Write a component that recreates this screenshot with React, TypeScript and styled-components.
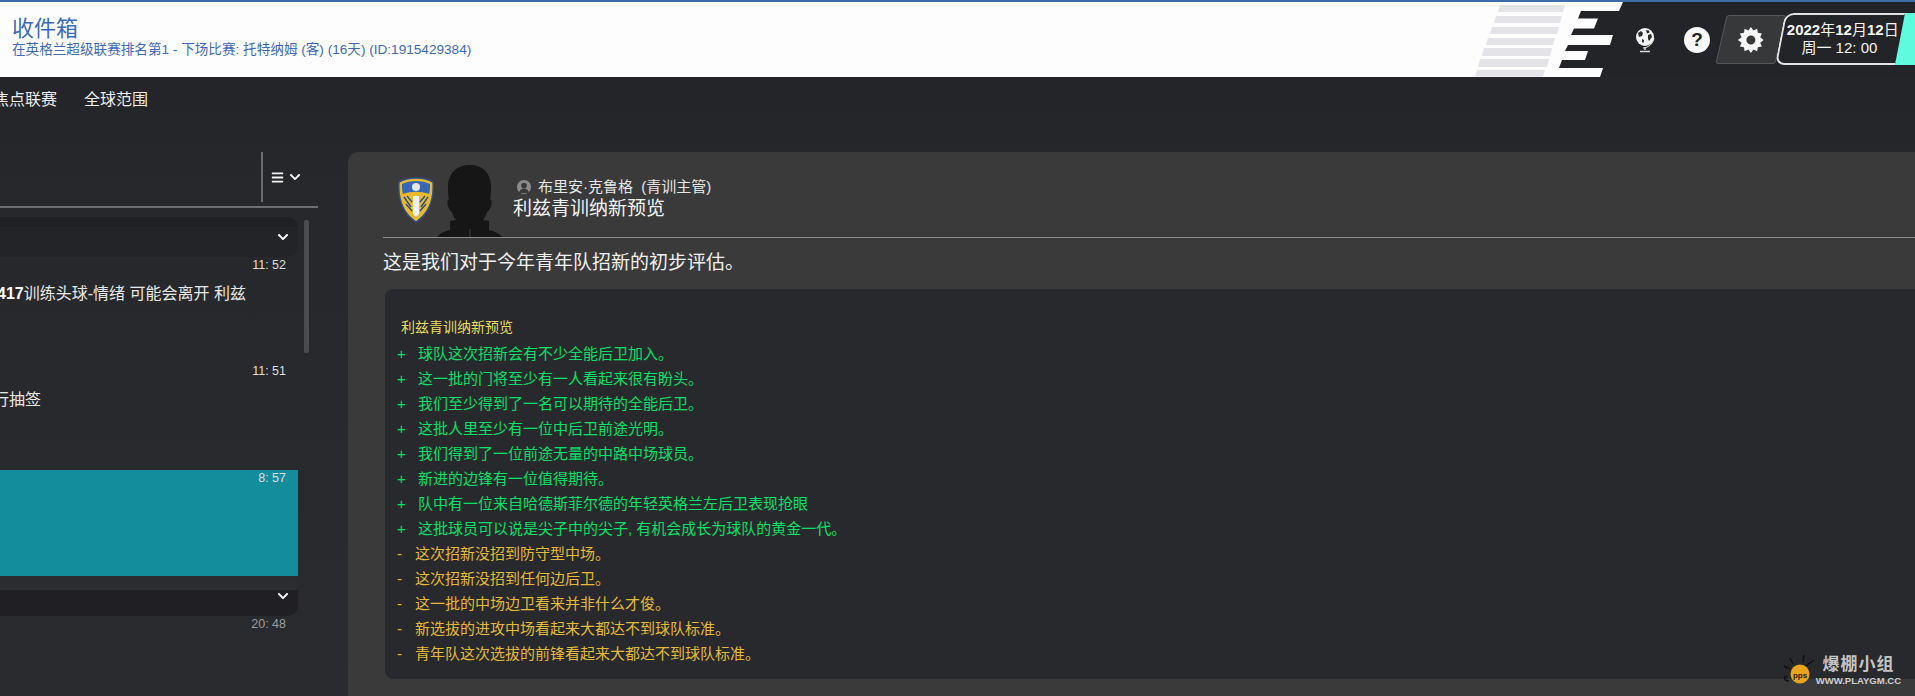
import React from 'react';
import styled, { createGlobalStyle } from 'styled-components';
import { FaBars, FaChevronDown } from 'react-icons/fa';

const GlobalStyle = createGlobalStyle`
  html, body {
    margin: 0;
    padding: 0;
    height: 100%;
    background: #26272b;
  }

  #root {
    height: 100%;
  }
`;

const Page = styled.div`
  position: relative;
  display: flex;
  flex-direction: column;
  width: 100%;
  height: 100%;
  overflow: hidden;
  background: linear-gradient(180deg, #222327 0%, #27282b 30%, #2a2b2e 100%);
  color: #e6e6e6;
  font-family: "Liberation Sans", "Noto Sans CJK SC", sans-serif;
`;

const Header = styled.header`
  display: flex;
  flex-shrink: 0;
  height: 75px;
  border-top: 2px solid #3d6ca6;
  background: #232428;
`;

const TitleBlock = styled.div`
  display: flex;
  flex-direction: column;
  width: 1428px;
  padding: 14px 0 0 12px;
  background: #fdfdfe;
  color: #3d69ba;
`;

const Title = styled.h1`
  margin: 0;
  font-size: 22px;
  line-height: 25px;
  font-weight: 400;
`;

const Subtitle = styled.div`
  font-size: 13.6px;
  line-height: 17px;
  white-space: nowrap;
`;

const LogoMark = styled.svg`
  flex-shrink: 0;
  width: 185px;
  height: 75px;
`;

const Tools = styled.div`
  display: flex;
  align-items: flex-start;
  flex: 1;
  min-width: 0;
`;

const GlobeIcon = styled.svg`
  flex-shrink: 0;
  width: 22px;
  height: 26px;
  margin: 25px 0 0 9px;
`;

const HelpButton = styled.div`
  display: flex;
  align-items: center;
  justify-content: center;
  flex-shrink: 0;
  width: 26px;
  height: 26px;
  margin: 25px 0 0 28px;
  border-radius: 50%;
  background: #f8f8f8;
  color: #232428;
  font-size: 19px;
  font-weight: 700;
`;

const SettingsButton = styled.div`
  display: flex;
  align-items: center;
  justify-content: center;
  flex-shrink: 0;
  width: 58px;
  height: 47px;
  margin: 13px 0 0 11px;
  border: 1px solid #55575a;
  border-radius: 3px;
  background: #37383a;
  transform: skewX(-13deg);
`;

const GearIcon = styled.svg`
  width: 28px;
  height: 28px;
  transform: skewX(13deg);
`;

const DateWrap = styled.div`
  display: flex;
  flex-shrink: 0;
  height: 52px;
  margin: 11px -40px 0 -1px;
  transform: skewX(-11deg);
`;

const DateBox = styled.div`
  display: flex;
  flex-direction: column;
  align-items: center;
  justify-content: center;
  box-sizing: border-box;
  width: 120px;
  padding-bottom: 2px;
  border: 2px solid #e4e4e4;
  border-right: none;
  border-radius: 9px 0 0 9px;
  background: #232428;
`;

const DateText = styled.div<{ $top?: boolean }>`
  padding-top: ${props => (props.$top ? '0' : '1px')};
  font-size: 15px;
  line-height: 17px;
  white-space: nowrap;
  color: #f4f4f4;
  transform: skewX(11deg);

  b {
    font-weight: 700;
  }
`;

const DateAccent = styled.div`
  width: 60px;
  background: #5ffbdf;
`;

const Nav = styled.nav`
  display: flex;
  align-items: center;
  flex-shrink: 0;
  gap: 27px;
  height: 42px;
  margin-left: -7px;
`;

const NavItem = styled.span`
  font-size: 16px;
  color: #ececec;
  white-space: nowrap;
`;

const Main = styled.div`
  display: flex;
  flex: 1;
  min-height: 0;
  padding-top: 33px;
`;

const ListColumn = styled.section`
  display: flex;
  flex-direction: column;
  flex-shrink: 0;
  width: 718px;
  margin-left: -400px;
`;

const ListToolbar = styled.div`
  display: flex;
  justify-content: flex-end;
  box-sizing: content-box;
  height: 50px;
  padding-bottom: 4px;
  border-bottom: 2px solid #6c6d6f;
`;

const ToolbarMenu = styled.div`
  display: flex;
  align-items: center;
  gap: 5px;
  width: 57px;
  padding-left: 8px;
  box-sizing: border-box;
  border-left: 2px solid #6c6d6f;
  color: #f2f2f2;
`;

const ListBody = styled.div`
  display: flex;
  flex: 1;
  min-height: 0;
  gap: 6px;
  padding-top: 9px;
`;

const Messages = styled.div`
  display: flex;
  flex-direction: column;
  width: 698px;
`;

const GroupRow = styled.div<{ $flip?: boolean }>`
  display: flex;
  align-items: center;
  justify-content: flex-end;
  flex-shrink: 0;
  height: 40px;
  padding-right: 9px;
  box-sizing: border-box;
  border-radius: 0 10px 10px 0;
  color: #fff;
  background: ${props => (props.$flip
    ? 'linear-gradient(180deg, #2b2c30 0%, #2b2c30 35%, #201f24 36%, #201f24 100%)'
    : 'linear-gradient(180deg, #1f2024 0%, #1f2024 25%, #232427 26%, #232427 100%)')};
`;

const Message = styled.div<{ $active?: boolean }>`
  display: flex;
  flex-direction: column;
  flex-shrink: 0;
  height: 106px;
  margin-top: ${props => (props.$active ? '1px' : '0')};
  box-sizing: border-box;
  background: ${props => (props.$active ? '#138c9c' : 'transparent')};
`;

const Time = styled.div<{ $dim?: boolean }>`
  padding: 1px 12px 0 0;
  font-size: 12.5px;
  line-height: 14px;
  text-align: right;
  color: ${props => (props.$dim ? '#9c9c9c' : '#dedede')};
`;

const MessageText = styled.div<{ $indent: number }>`
  padding: 12px 0 0 ${props => props.$indent}px;
  font-size: 16px;
  line-height: 20px;
  color: #e8e8e8;
  white-space: nowrap;

  b {
    font-weight: 700;
    color: #fff;
  }
`;

const ScrollThumb = styled.div`
  flex-shrink: 0;
  width: 5px;
  height: 133px;
  margin-top: 3px;
  border-radius: 2px;
  background: #4b4c4f;
`;

const Panel = styled.article`
  display: flex;
  flex-direction: column;
  flex: 1;
  min-width: 0;
  margin: 0 -20px 0 30px;
  padding-left: 35px;
  border-radius: 10px 0 0 0;
  background: #3a3a3b;
`;

const PanelHead = styled.div`
  display: flex;
  flex-shrink: 0;
  height: 85px;
  border-bottom: 1px solid #8d8d8d;
`;

const Crest = styled.svg`
  flex-shrink: 0;
  width: 36px;
  height: 46px;
  margin: 25px 0 0 15px;
`;

const Silhouette = styled.svg`
  flex-shrink: 0;
  width: 66px;
  height: 72px;
  margin: 13px 0 0 3px;
`;

const HeadText = styled.div`
  display: flex;
  flex-direction: column;
  padding: 25px 0 0 10px;
`;

const Sender = styled.div`
  display: flex;
  align-items: center;
  gap: 7px;
  padding-left: 4px;
  font-size: 15px;
  line-height: 20px;
  color: #e6e6e6;
  white-space: pre;
`;

const SenderIcon = styled.svg`
  width: 14px;
  height: 14px;
`;

const HeadTitle = styled.div`
  font-size: 19px;
  line-height: 24px;
  color: #f2f2f2;
`;

const Lead = styled.p`
  flex-shrink: 0;
  margin: 0;
  padding: 13px 0 0 0;
  font-size: 19px;
  line-height: 24px;
  color: #f0f0f0;
`;

const Report = styled.div`
  display: flex;
  flex-direction: column;
  flex-shrink: 0;
  height: 390px;
  box-sizing: border-box;
  margin: 14px 0 0 2px;
  padding: 29px 0 0 12px;
  border-radius: 8px 0 0 8px;
  background: #28292c;
`;

const ReportTitle = styled.div`
  height: 26px;
  padding-left: 4px;
  font-size: 14px;
  line-height: 18px;
  color: #e8dc5e;
`;

const ReportRow = styled.div<{ $good: boolean }>`
  display: flex;
  height: 25px;
  font-size: 15px;
  line-height: 20px;
  white-space: nowrap;
  color: ${props => (props.$good ? '#05e06a' : '#e4ba38')};
`;

const RowMark = styled.span<{ $good: boolean }>`
  flex-shrink: 0;
  width: ${props => (props.$good ? '21px' : '18px')};
`;

const Watermark = styled.div`
  position: absolute;
  right: 14px;
  bottom: 8px;
  display: flex;
  align-items: center;
  gap: 0;
`;

const WatermarkBall = styled.svg`
  width: 40px;
  height: 36px;
`;

const WatermarkText = styled.div`
  display: flex;
  flex-direction: column;
  align-items: center;
`;

const WatermarkName = styled.div`
  font-size: 17px;
  line-height: 20px;
  letter-spacing: 1px;
  font-weight: 700;
  color: #c4c4c4;
`;

const WatermarkUrl = styled.div`
  font-size: 9.500px;
  line-height: 11px;
  font-weight: 700;
  color: #cfcfcf;
`;

const stripes: [number, number, number, number][] = [
  [58, 3, 123, 10],
  [54, 14, 120, 21],
  [50, 25, 117, 32],
  [46, 36, 113, 43],
  [42, 46, 110, 54],
  [38, 57, 107, 65],
  [35, 68, 103, 74.5],
];

const goodNotes = [
  '球队这次招新会有不少全能后卫加入。',
  '这一批的门将至少有一人看起来很有盼头。',
  '我们至少得到了一名可以期待的全能后卫。',
  '这批人里至少有一位中后卫前途光明。',
  '我们得到了一位前途无量的中路中场球员。',
  '新进的边锋有一位值得期待。',
  '队中有一位来自哈德斯菲尔德的年轻英格兰左后卫表现抢眼',
  '这批球员可以说是尖子中的尖子, 有机会成长为球队的黄金一代。',
];

const badNotes = [
  '这次招新没招到防守型中场。',
  '这次招新没招到任何边后卫。',
  '这一批的中场边卫看来并非什么才俊。',
  '新选拔的进攻中场看起来大都达不到球队标准。',
  '青年队这次选拔的前锋看起来大都达不到球队标准。',
];

const App: React.FC = () => (
  <Page>
    <GlobalStyle />
    <Header>
      <TitleBlock>
        <Title>收件箱</Title>
        <Subtitle>在英格兰超级联赛排名第1 - 下场比赛: 托特纳姆 (客) (16天) (ID:1915429384)</Subtitle>
      </TitleBlock>
      <LogoMark viewBox="0 0 185 75">
        <polygon
          fill="#fdfdfe"
          points="0,0 183,0 179,9 141,9 138,16.5 158,16.5 154,26.5 134,26.5 131,33 173,33 170,43 128,43 125,49 148,49 145,58 122,58 119,66 163,66 160,75 0,75"
        />
        {stripes.map(([left, top, right, bottom]) => (
          <polygon
            key={top}
            fill="#e4e3e8"
            points={`${left + 2},${top} ${right + 2},${top} ${right},${bottom} ${left},${bottom}`}
          />
        ))}
      </LogoMark>
      <Tools>
        <GlobeIcon viewBox="0 0 22 26">
          <circle cx="11" cy="10" r="9" fill="#f4f4f4" />
          <path d="M4 6l3-2 2 2-1 3-3 1zM12 3l3 .5.5 2-2.500 1zM14 8l3-1 1 3-3 4-1-2zM8 12l2 1-.5 3-1.500-1z" fill="#2a2b2e" />
          <path d="M9 21c5 0 10-4 11-10" fill="none" stroke="#f4f4f4" strokeWidth="1" />
          <path d="M11 20v3" stroke="#d8d8d8" strokeWidth="1.500" />
          <path d="M6 24.500h10" stroke="#d8d8d8" strokeWidth="1.500" />
        </GlobeIcon>
        <HelpButton>?</HelpButton>
        <SettingsButton>
          <GearIcon viewBox="0 0 28 28">
            <path
              fill="#f6f6f6"
              fillRule="evenodd"
              d="M14 1l2.500 3.400 3.800-1.700.6 4.100 4.100.6-1.700 3.800 3.400 2.800-3.400 2.800 1.700 3.800-4.100.6-.6 4.100-3.800-1.700L14 27l-2.500-3.400-3.800 1.700-.6-4.100-4.100-.6 1.700-3.800L1 14l3.700-2.800L3 7.400l4.100-.6.6-4.100 3.800 1.700zM14 9.500a4.500 4.500 0 1 0 0 9 4.500 4.500 0 0 0 0-9z"
            />
          </GearIcon>
        </SettingsButton>
        <DateWrap>
          <DateBox>
            <DateText $top><b>2022</b>年<b>12</b>月<b>12</b>日</DateText>
            <DateText>周一 12: 00</DateText>
          </DateBox>
          <DateAccent />
        </DateWrap>
      </Tools>
    </Header>

    <Nav>
      <NavItem>焦点联赛</NavItem>
      <NavItem>全球范围</NavItem>
    </Nav>

    <Main>
      <ListColumn>
        <ListToolbar>
          <ToolbarMenu>
            <FaBars size={13} />
            <FaChevronDown size={12} />
          </ToolbarMenu>
        </ListToolbar>
        <ListBody>
          <Messages>
            <GroupRow>
              <FaChevronDown size={12} />
            </GroupRow>
            <Message>
              <Time>11: 52</Time>
              <MessageText $indent={397}><b>417</b>训练头球-情绪 可能会离开 利兹</MessageText>
            </Message>
            <Message>
              <Time>11: 51</Time>
              <MessageText $indent={393}>行抽签</MessageText>
            </Message>
            <Message $active>
              <Time>8: 57</Time>
            </Message>
            <GroupRow $flip>
              <FaChevronDown size={12} />
            </GroupRow>
            <Time $dim>20: 48</Time>
          </Messages>
          <ScrollThumb />
        </ListBody>
      </ListColumn>

      <Panel>
        <PanelHead>
          <Crest viewBox="0 0 36 46">
            <path d="M18 1c6 0 12 1 17 4 1 14-2 30-17 40C3 35 0 19 1 5c5-3 11-4 17-4z" fill="#e9b92c" stroke="#2c4f8f" strokeWidth="1.500" />
            <path d="M4 7c4-2 9-3 14-3s10 1 14 3c0 4 0 7-1 10-8-3-18-3-26 0-1-3-1-6-1-10z" fill="#3668b4" />
            <circle cx="18" cy="10" r="4" fill="#e6e6e6" />
            <path d="M15 19h6v18l-3 3-3-3z" fill="#f1f1f1" />
            <path d="M6 20l7 10M9 19l5 6M30 20l-7 10M27 19l-5 6M8 27l6 7M28 27l-6 7" stroke="#2c4f8f" strokeWidth="1.400" />
          </Crest>
          <Silhouette viewBox="0 0 66 72">
            <path
              d="M33 0c13 0 21 8 21 22 0 5 0 9-1 12 2 1 2 4 1 7-1 3-2 5-4 6-1 3-2 6-4 8l6 1v9c5 1 10 3 13 7H0c3-4 8-6 13-7v-9l6-1c-2-2-3-5-4-8-2-1-3-3-4-6-1-3-1-6 1-7-1-3-1-7-1-12C11 8 20 0 33 0z"
              fill="#161616"
            />
            <path d="M33 64v8" stroke="#3f3f3f" strokeWidth="1" />
          </Silhouette>
          <HeadText>
            <Sender>
              <SenderIcon viewBox="0 0 14 14">
                <circle cx="7" cy="7" r="7" fill="#8b8b8b" />
                <circle cx="7" cy="5.500" r="2.800" fill="#3a3a3b" />
                <path d="M2 13c.5-3 2.500-4.500 5-4.500s4.500 1.500 5 4.500z" fill="#3a3a3b" />
              </SenderIcon>
              布里安·克鲁格  (青训主管)
            </Sender>
            <HeadTitle>利兹青训纳新预览</HeadTitle>
          </HeadText>
        </PanelHead>
        <Lead>这是我们对于今年青年队招新的初步评估。</Lead>
        <Report>
          <ReportTitle>利兹青训纳新预览</ReportTitle>
          {goodNotes.map(note => (
            <ReportRow key={note} $good>
              <RowMark $good>+</RowMark>
              {note}
            </ReportRow>
          ))}
          {badNotes.map(note => (
            <ReportRow key={note} $good={false}>
              <RowMark $good={false}>-</RowMark>
              {note}
            </ReportRow>
          ))}
        </Report>
      </Panel>
    </Main>

    <Watermark>
      <WatermarkBall viewBox="0 0 40 36">
        <path d="M14 6l3 6M28 3l-1 7M8 14l6 3M38 8l-8 6M11 24c-4 1-3 5 2 5" fill="none" stroke="#111" strokeWidth="1.500" />
        <circle cx="24" cy="22" r="9.500" fill="#eaa31e" />
        <text x="24" y="26" textAnchor="middle" fontSize="8" fontWeight="700" fill="#1c1c1c">pps</text>
      </WatermarkBall>
      <WatermarkText>
        <WatermarkName>爆棚小组</WatermarkName>
        <WatermarkUrl>WWW.PLAYGM.CC</WatermarkUrl>
      </WatermarkText>
    </Watermark>
  </Page>
);

export default App;
